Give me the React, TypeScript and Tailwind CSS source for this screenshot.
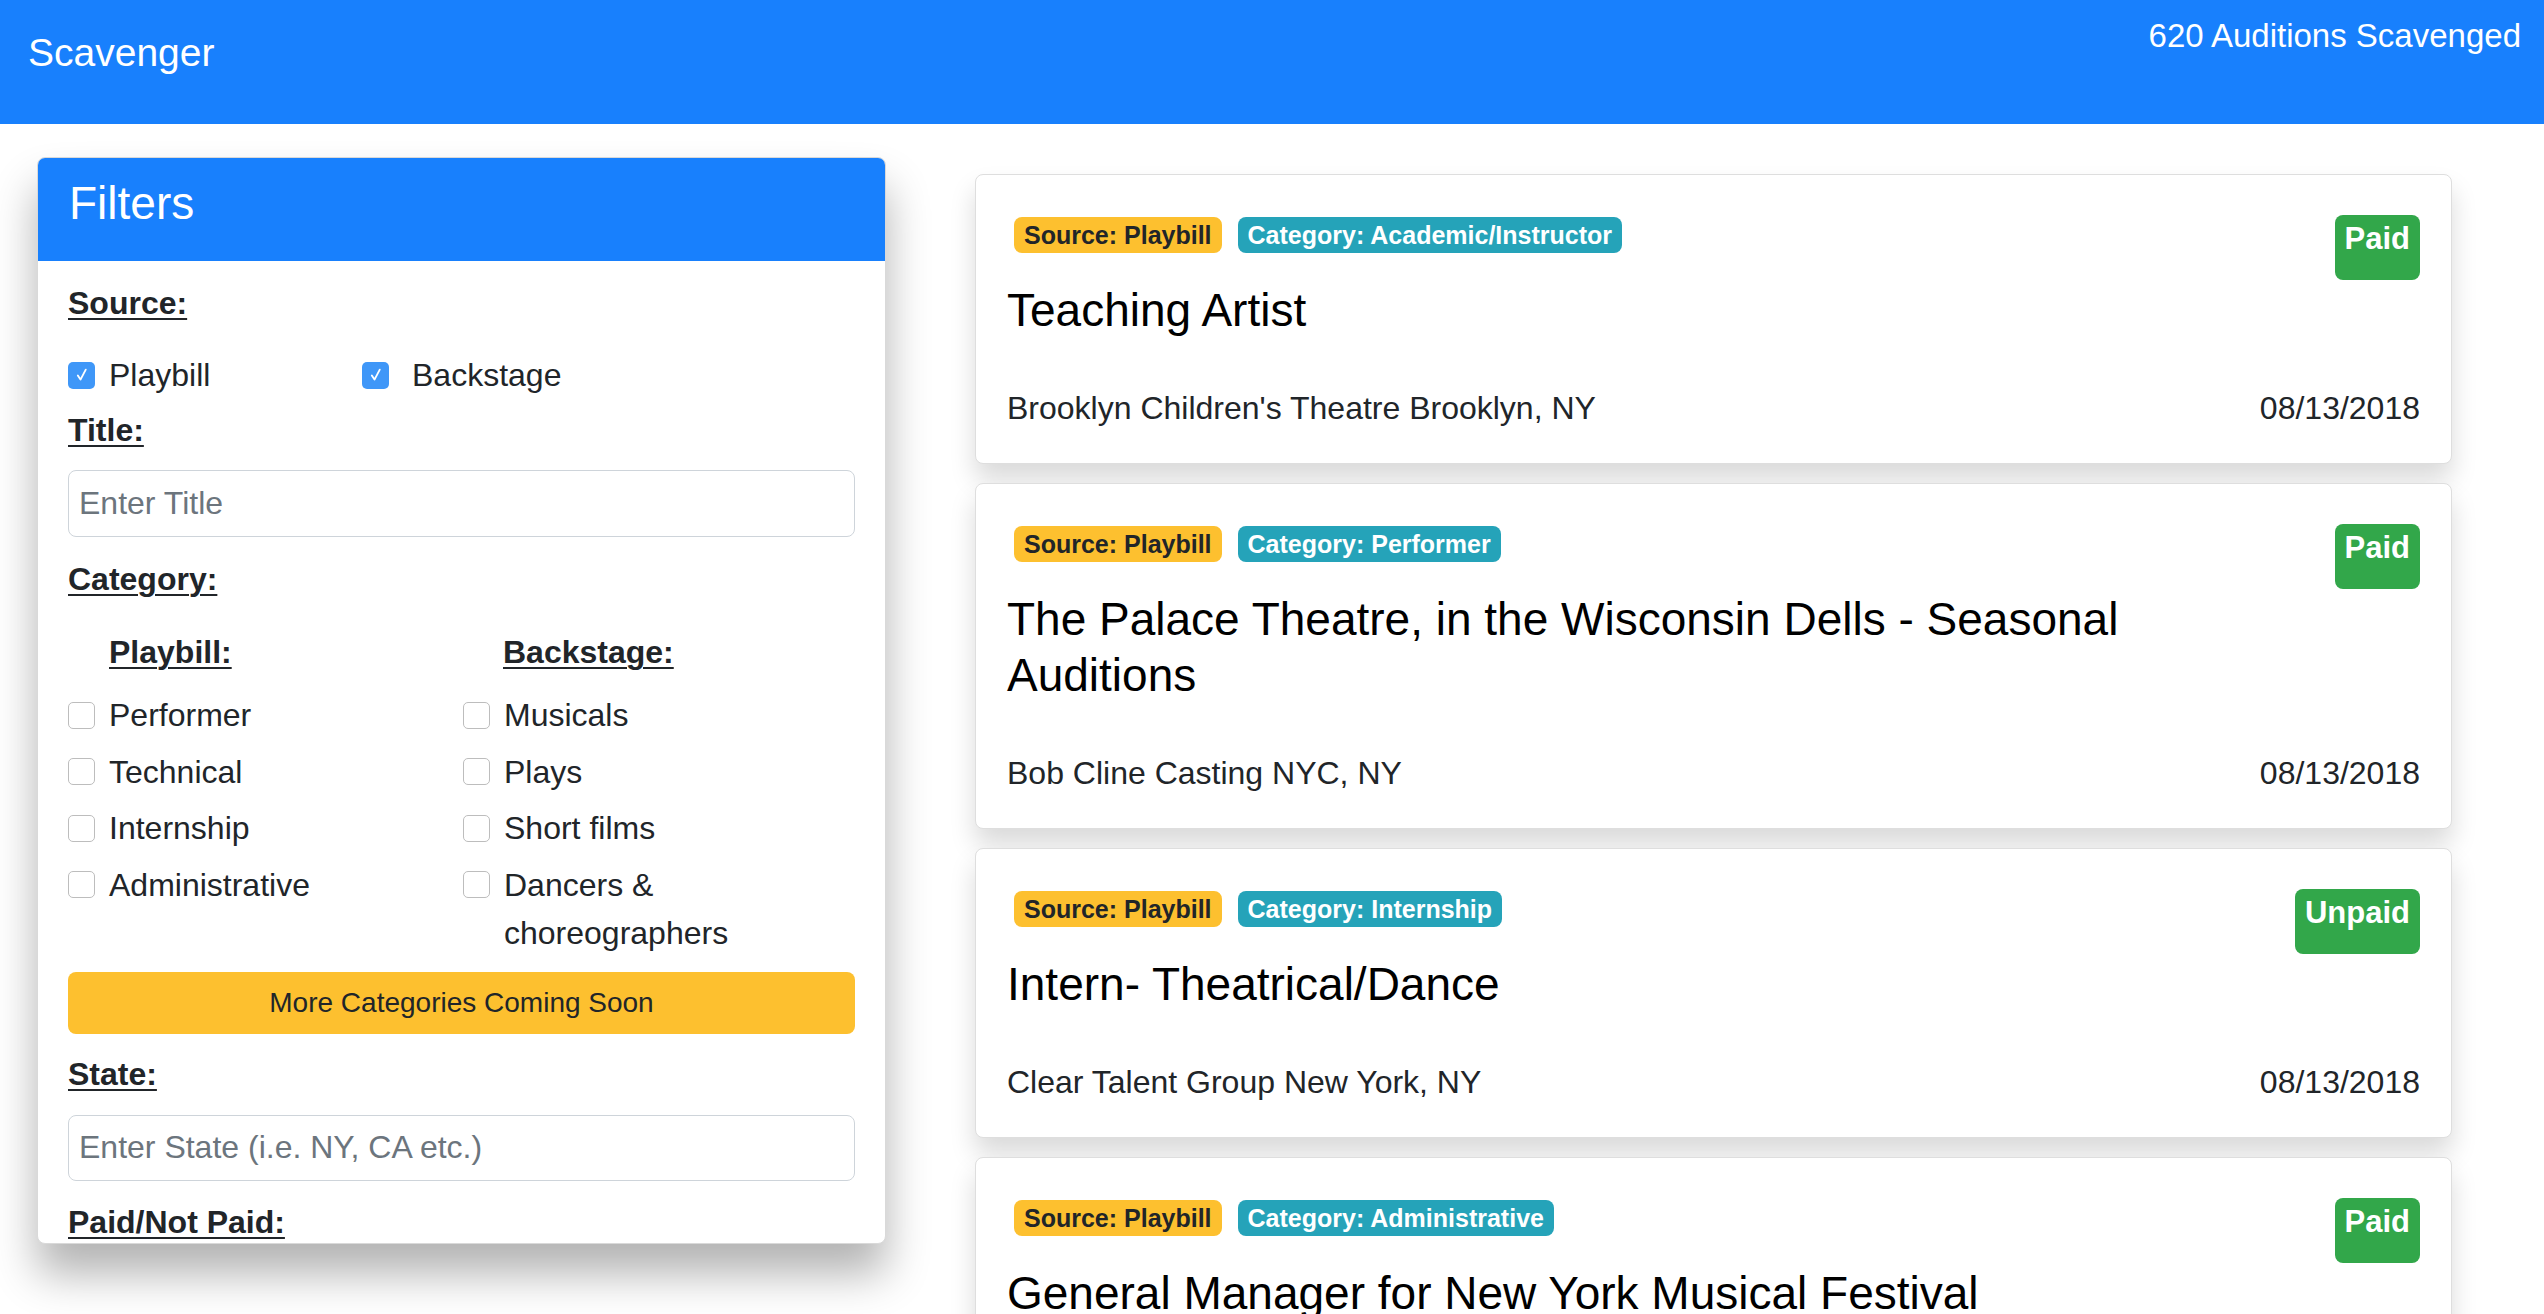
import React from 'react';

type Job = {
  category: string;
  title: string;
  company: string;
  date: string;
  paid: boolean;
};

const jobs: Job[] = [
  {
    category: 'Academic/Instructor',
    title: 'Teaching Artist',
    company: "Brooklyn Children's Theatre Brooklyn, NY",
    date: '08/13/2018',
    paid: true,
  },
  {
    category: 'Performer',
    title: 'The Palace Theatre, in the Wisconsin Dells - Seasonal Auditions',
    company: 'Bob Cline Casting NYC, NY',
    date: '08/13/2018',
    paid: true,
  },
  {
    category: 'Internship',
    title: 'Intern- Theatrical/Dance',
    company: 'Clear Talent Group New York, NY',
    date: '08/13/2018',
    paid: false,
  },
  {
    category: 'Administrative',
    title: 'General Manager for New York Musical Festival',
    company: 'New York Musical Festival New York, NY',
    date: '08/13/2018',
    paid: true,
  },
];

function CheckBox({ checked }: { checked?: boolean }) {
  if (checked) {
    return (
      <span className="w-[27px] h-[27px] shrink-0 rounded-[5px] bg-[#3f97f8] flex items-center justify-center">
        <svg className="w-[20px] h-[20px]" viewBox="0 0 24 24" fill="none" stroke="white" strokeWidth={2.2} strokeLinecap="round" strokeLinejoin="round">
          <path d="M7 12.5l3.2 5L16.5 5.5" />
        </svg>
      </span>
    );
  }
  return <span className="w-[27px] h-[27px] shrink-0 rounded-[5px] border border-[#bdbdbd] bg-white" />;
}

function Check({ label, checked }: { label: string; checked?: boolean }) {
  return (
    <label className="flex items-start gap-[14px] leading-[48px]">
      <span className="h-[48px] flex items-center">
        <CheckBox checked={checked} />
      </span>
      <span>{label}</span>
    </label>
  );
}

function FilterLabel({ children }: { children: React.ReactNode }) {
  return <div className="font-bold underline decoration-2 underline-offset-[4px] leading-[48px]">{children}</div>;
}

function Filters() {
  return (
    <div className="w-[849px] shrink-0 rounded-[8px] border border-[#d9d9d9] bg-white overflow-hidden shadow-[0_30px_44px_rgba(0,0,0,0.3)]">
      {/* header */}
      <div className="h-[103px] bg-[#1880fd] px-[31px] pt-[17px]">
        <h4 className="text-[46px] leading-[56px] text-white">Filters</h4>
      </div>

      <div className="h-[982px] overflow-hidden px-[30px] pt-[18px] text-[32px] text-[#212529]">
        <FilterLabel>Source:</FilterLabel>
        <div className="mt-[24px] flex">
          <div className="w-[294px]">
            <Check label="Playbill" checked />
          </div>
          <div className="flex items-start gap-[23px] leading-[48px]">
            <span className="h-[48px] flex items-center">
              <CheckBox checked />
            </span>
            <span>Backstage</span>
          </div>
        </div>

        <div className="mt-[7px]">
          <FilterLabel>Title:</FilterLabel>
        </div>
        <input
          placeholder="Enter Title"
          className="mt-[16px] w-full h-[67px] rounded-[8px] border border-[#ced4da] pl-[10px] text-[32px] placeholder-[#6c757d] outline-none"
        />

        <div className="mt-[18px]">
          <FilterLabel>Category:</FilterLabel>
        </div>

        <div className="mt-[25px] grid grid-cols-[395px_1fr]">
          <div className="pl-[41px]">
            <FilterLabel>Playbill:</FilterLabel>
          </div>
          <div className="pl-[40px]">
            <FilterLabel>Backstage:</FilterLabel>
          </div>
        </div>

        <div className="mt-[15px] grid grid-cols-[395px_1fr]">
          <div className="flex flex-col gap-[8.5px]">
            <Check label="Performer" />
            <Check label="Technical" />
            <Check label="Internship" />
            <Check label="Administrative" />
          </div>
          <div className="flex flex-col gap-[8.5px]">
            <Check label="Musicals" />
            <Check label="Plays" />
            <Check label="Short films" />
            <Check label="Dancers & choreographers" />
          </div>
        </div>

        <button className="mt-[15px] w-full h-[62px] rounded-[8px] bg-[#fdc02f] text-[28px] text-[#212529]">
          More Categories Coming Soon
        </button>

        <div className="mt-[16px]">
          <FilterLabel>State:</FilterLabel>
        </div>
        <input
          placeholder="Enter State (i.e. NY, CA etc.)"
          className="mt-[17px] w-full h-[66px] rounded-[8px] border border-[#ced4da] pl-[10px] text-[32px] placeholder-[#6c757d] outline-none"
        />

        <div className="mt-[17px]">
          <FilterLabel>Paid/Not Paid:</FilterLabel>
        </div>
        <div className="mt-[16px] flex">
          <div className="w-[294px]">
            <Check label="Paid" checked />
          </div>
          <Check label="Unpaid" checked />
        </div>
      </div>
    </div>
  );
}

function JobCard({ job }: { job: Job }) {
  return (
    <div className="rounded-[8px] border border-[#dedede] bg-white px-[31px] pt-[40px] pb-[31px] shadow-[0_16px_26px_rgba(0,0,0,0.15)]">
      <div className="flex items-start">
        <div className="flex-1">
          <div className="mt-[2px] ml-[7px] flex gap-[16px]">
            <span className="h-[36px] rounded-[8px] bg-[#fdc02f] px-[10px] text-[25px] font-bold leading-[36px] text-[#212529]">
              Source: Playbill
            </span>
            <span className="h-[36px] rounded-[8px] bg-[#25a3b9] px-[10px] text-[25px] font-bold leading-[36px] text-white">
              Category: {job.category}
            </span>
          </div>
          <h4 className="mt-[29px] text-[46px] leading-[56px] text-black">{job.title}</h4>
        </div>
        <div className="w-[240px] flex justify-end">
          <span className="h-[65px] rounded-[8px] bg-[#32a74a] px-[10px] text-[31px] font-bold leading-[48px] text-white">
            {job.paid ? 'Paid' : 'Unpaid'}
          </span>
        </div>
      </div>
      <div className="mt-[46px] flex justify-between text-[32px] leading-[48px] text-[#212529]">
        <span>{job.company}</span>
        <span>{job.date}</span>
      </div>
    </div>
  );
}

export default function App() {
  return (
    <div className="min-h-screen bg-white font-['Liberation_Sans',Arial,sans-serif] text-[#212529]">
      {/* Navbar */}
      <nav className="h-[124px] bg-[#1880fd] flex items-start justify-between pl-[28px] pr-[23px] text-white">
        <span className="mt-[29px] text-[39px] leading-[48px]">Scavenger</span>
        <span className="mt-[16px] text-[33px] leading-[40px]">620 Auditions Scavenged</span>
      </nav>

      <main className="flex items-start pl-[37px] pt-[33px]">
        <Filters />
        <div className="ml-[89px] mt-[17px] w-[1477px] flex flex-col gap-[19px]">
          {jobs.map((job) => (
            <JobCard key={job.title} job={job} />
          ))}
        </div>
      </main>
    </div>
  );
}
